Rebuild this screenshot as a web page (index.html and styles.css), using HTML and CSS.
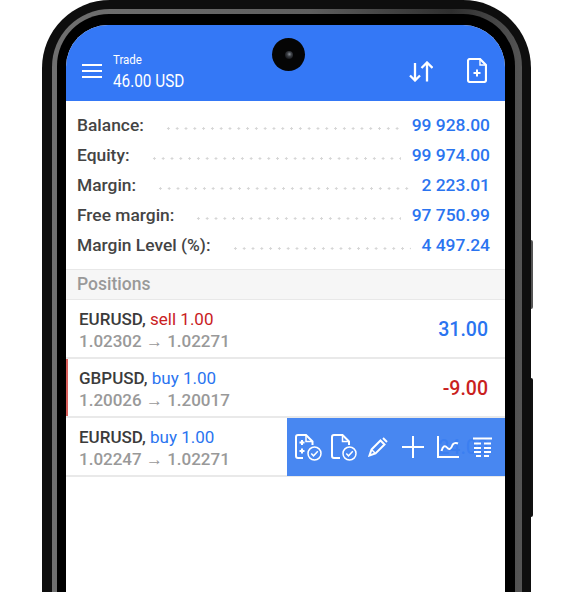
FILE: index.html
```html
<!DOCTYPE html>
<html lang="en">
<head>
    <meta charset="UTF-8">
    <meta name="viewport" content="width=device-width, initial-scale=1.0">
    <title>Trade</title>
    <link rel="stylesheet" href="styles.css">
</head>
<body>
    <div class="phone">
        <span class="side-btn side-btn-power"></span>
        <span class="side-btn side-btn-volume"></span>
        <div class="bezel-grey">
            <div class="bezel-black">
                <div class="screen">
                    <span class="camera"><span class="lens"></span></span>
                    <header class="topbar">
                        <svg class="menu-icon" width="20" height="14" viewBox="0 0 20 14">
                            <path d="M0 1H20M0 7H20M0 13H20" stroke="#fff" stroke-width="2" fill="none"/>
                        </svg>
                        <div class="title">
                            <span class="title-small">Trade</span>
                            <span class="title-big">46.00 USD</span>
                        </div>
                        <svg class="sort-icon" width="24" height="21" viewBox="0 0 24 21">
                            <path d="M6 2V19.500M1 14.500L6 19.500L11 14.500M18 20.500V1.500M12.500 7L18 1.500L23.500 7" stroke="#fff" stroke-width="2.300" fill="none"/>
                        </svg>
                        <svg class="doc-icon" width="20" height="25" viewBox="0 0 20 25">
                            <path d="M3 1H13L19 7V22A2 2 0 0 1 17 24H3A2 2 0 0 1 1 22V3A2 2 0 0 1 3 1Z" stroke="#fff" stroke-width="2.200" fill="none"/>
                            <path d="M13 1V7H19" stroke="#fff" stroke-width="1.400" fill="none"/>
                            <path d="M10 11.500V18.500M6.500 15H13.500" stroke="#fff" stroke-width="2" fill="none"/>
                        </svg>
                    </header>

                    <section class="summary">
                        <div class="summary-row"><span class="summary-label">Balance:</span><span class="dots"></span><span class="summary-value">99 928.00</span></div>
                        <div class="summary-row"><span class="summary-label">Equity:</span><span class="dots"></span><span class="summary-value">99 974.00</span></div>
                        <div class="summary-row"><span class="summary-label">Margin:</span><span class="dots"></span><span class="summary-value">2 223.01</span></div>
                        <div class="summary-row"><span class="summary-label">Free margin:</span><span class="dots"></span><span class="summary-value">97 750.99</span></div>
                        <div class="summary-row"><span class="summary-label">Margin Level (%):</span><span class="dots"></span><span class="summary-value">4 497.24</span></div>
                    </section>

                    <div class="section-head">Positions</div>

                    <div class="position">
                        <div class="position-info">
                            <div class="position-name">EURUSD, <span class="sell">sell 1.00</span></div>
                            <div class="position-price">1.02302 → 1.02271</div>
                        </div>
                        <div class="profit profit-up">31.00</div>
                    </div>
                    <div class="position position-marked">
                        <div class="position-info">
                            <div class="position-name">GBPUSD, <span class="buy">buy 1.00</span></div>
                            <div class="position-price">1.20026 → 1.20017</div>
                        </div>
                        <div class="profit profit-down">-9.00</div>
                    </div>
                    <div class="position">
                        <div class="position-info">
                            <div class="position-name">EURUSD, <span class="buy">buy 1.00</span></div>
                            <div class="position-price">1.02247 → 1.02271</div>
                        </div>
                        <div class="profit profit-up">24.00</div>
                        <div class="actions">
                            <svg width="27" height="27" viewBox="0 0 27 27">
                                <path d="M8 24H3A2 2 0 0 1 1 22V3A2 2 0 0 1 3 1H11L17.500 7.500V11" class="line"/>
                                <path d="M11 1V7.500H17.500" class="thin"/>
                                <path d="M7 6V11M4.500 8.500H9.500M7 14.500V19.500M4.500 17H9.500" class="line"/>
                                <circle cx="19.500" cy="19.500" r="6.500" class="thin"/>
                                <path d="M16.300 19.500L18.500 21.800L22.800 17.300" class="thin"/>
                            </svg>
                            <svg width="26" height="27" viewBox="0 0 26 27">
                                <path d="M9 24H3A2 2 0 0 1 1 22V3A2 2 0 0 1 3 1H11.500L18 7.500V11" class="line"/>
                                <path d="M11.500 1V7.500H18" class="thin"/>
                                <circle cx="18.500" cy="19.500" r="6.500" class="thin"/>
                                <path d="M15.300 19.500L17.500 21.800L21.800 17.300" class="thin"/>
                            </svg>
                            <svg width="20" height="20" viewBox="0 0 20 20">
                                <path d="M3.500 12.500L12.500 3.500L16.500 7.500L7.500 16.500L1.500 18.500Z" class="line"/>
                                <path d="M15 1L19 5" class="line"/>
                                <path d="M4 13L7 16" class="thin"/>
                            </svg>
                            <svg width="22" height="22" viewBox="0 0 22 22">
                                <path d="M11 0V22M0 11H22" class="line"/>
                            </svg>
                            <svg width="22" height="22" viewBox="0 0 22 22">
                                <path d="M1 0V21H22" class="line"/>
                                <path d="M4.500 15C6 10 8 9 10 11.500C12 14 14 13.500 15.500 9C16.500 7 19 6.500 21 7.500" class="line"/>
                            </svg>
                            <svg width="19" height="20" viewBox="0 0 19 20">
                                <path d="M0 1.500H19M1 6.500H8M11 6.500H18M1 11H8M11 11H18M1 15H8M11 15H18M3 19H8M11 19H16" class="line"/>
                            </svg>
                        </div>
                    </div>
                </div>
            </div>
        </div>
    </div>
</body>
</html>
```

FILE: styles.css
```css
html, body {
    margin: 0;
    padding: 0;
    height: 592px;
    overflow: hidden;
    background: #fff;
}
body {
    font-family: Roboto, "Liberation Sans", sans-serif;
}

/* phone frame, three nested rings */
.phone {
    position: relative;
    width: 489px;
    height: 592px;
    margin-left: 42px;
    box-sizing: border-box;
    padding: 9px 9px 0 10px;
    background: #0e0e0e;
    border-radius: 68px 68px 0 0;
}
.bezel-grey {
    height: 100%;
    padding: 5px 7px 0 5px;
    box-sizing: border-box;
    background: linear-gradient(90deg, #707070, #5e5e5e 55%, #2e2e2e 85%, #555);
    border-radius: 58px 58px 0 0;
}
.bezel-black {
    height: 100%;
    padding: 11px 10px 0 9px;
    box-sizing: border-box;
    background: #000;
    border-radius: 52px 52px 0 0;
}
.screen {
    position: relative;
    height: 100%;
    background: #fff;
    border-radius: 42px 42px 0 0;
    overflow: hidden;
}
.side-btn {
    position: absolute;
    right: -2px;
    width: 2px;
    border-radius: 0 2px 2px 0;
}
.side-btn-power {
    top: 240px;
    height: 69px;
    background: #555;
}
.side-btn-volume {
    top: 378px;
    height: 139px;
    background: #111;
}
.camera {
    position: absolute;
    top: 13px;
    left: 206px;
    width: 33px;
    height: 33px;
    display: flex;
    align-items: center;
    justify-content: center;
    background: #050505;
    border-radius: 50%;
}
.lens {
    width: 8px;
    height: 8px;
    background: radial-gradient(circle at 55% 40%, #8a8f96 0, #3a3d42 35%, #15161a 75%);
    border-radius: 50%;
}

.topbar {
    display: flex;
    align-items: center;
    height: 76px;
    background: #3478f6;
    color: #fff;
}
.menu-icon {
    margin: 16px 0 0 16px;
}
.title {
    display: flex;
    flex-direction: column;
    width: 90px;
    margin: 19px 0 0 11px;
    transform: scaleX(0.85);
    transform-origin: left;
}
.title-small {
    font-size: 13.500px;
    line-height: 16px;
}
.title-big {
    font-size: 18px;
    line-height: 27px;
}
.sort-icon {
    margin: 17px 0 0 auto;
}
.doc-icon {
    margin: 15px 18px 0 34px;
}

.summary {
    padding: 9px 15px 9px 11px;
}
.summary-row {
    display: flex;
    align-items: center;
    height: 30px;
    font-size: 17.400px;
    font-weight: 500;
}
.summary-label {
    color: #444;
}
.dots {
    flex: 1;
    height: 3px;
    margin: 7px 11px 0 20px;
    background-image: radial-gradient(circle, #d6d6d6 1px, transparent 1.4px);
    background-size: 8.8px 3px;
}
.summary-value {
    color: #2a74f0;
}

.section-head {
    height: 31px;
    box-sizing: border-box;
    padding-left: 11px;
    line-height: 28px;
    font-size: 17.5px;
    font-weight: 500;
    color: #999;
    background: #f6f6f6;
    border-top: 1px solid #e8e8e8;
    border-bottom: 1px solid #e8e8e8;
}

.position {
    position: relative;
    display: flex;
    align-items: center;
    height: 59px;
    box-sizing: border-box;
    padding: 0 17px 0 13px;
    border-bottom: 2px solid #e9e9e9;
}
.position-marked {
    box-shadow: inset 2px 0 0 #d9605c;
}
.position-info {
    flex: 1;
    padding-top: 3px;
}
.position-name {
    font-size: 17px;
    line-height: 22px;
    font-weight: 500;
    color: #3b3b3b;
}
.sell {
    color: #c9211e;
    font-weight: 400;
}
.buy {
    color: #2a74f0;
    font-weight: 400;
}
.position-price {
    font-size: 17px;
    line-height: 22px;
    font-weight: 500;
    color: #999;
}
.profit {
    padding-top: 2px;
    font-size: 19.500px;
    font-weight: 500;
}
.profit-up {
    color: #2a74f0;
}
.profit-down {
    color: #c9211e;
}

/* buttons revealed by swiping a row */
.actions {
    position: absolute;
    top: 0;
    right: 0;
    bottom: -1px;
    width: 218px;
    box-sizing: border-box;
    padding-left: 8px;
    display: flex;
    align-items: center;
    background: rgba(61, 128, 240, 0.94);
}
.actions svg:nth-child(2) {
    margin-left: 9px;
}
.actions svg:nth-child(3) {
    margin-left: 11px;
}
.actions svg:nth-child(4) {
    margin-left: 14px;
}
.actions svg:nth-child(5) {
    margin-left: 13px;
}
.actions svg:nth-child(6) {
    margin-left: 14px;
}
.line {
    fill: none;
    stroke: #fff;
    stroke-width: 2;
}
.thin {
    fill: none;
    stroke: #fff;
    stroke-width: 1.500;
}
```
